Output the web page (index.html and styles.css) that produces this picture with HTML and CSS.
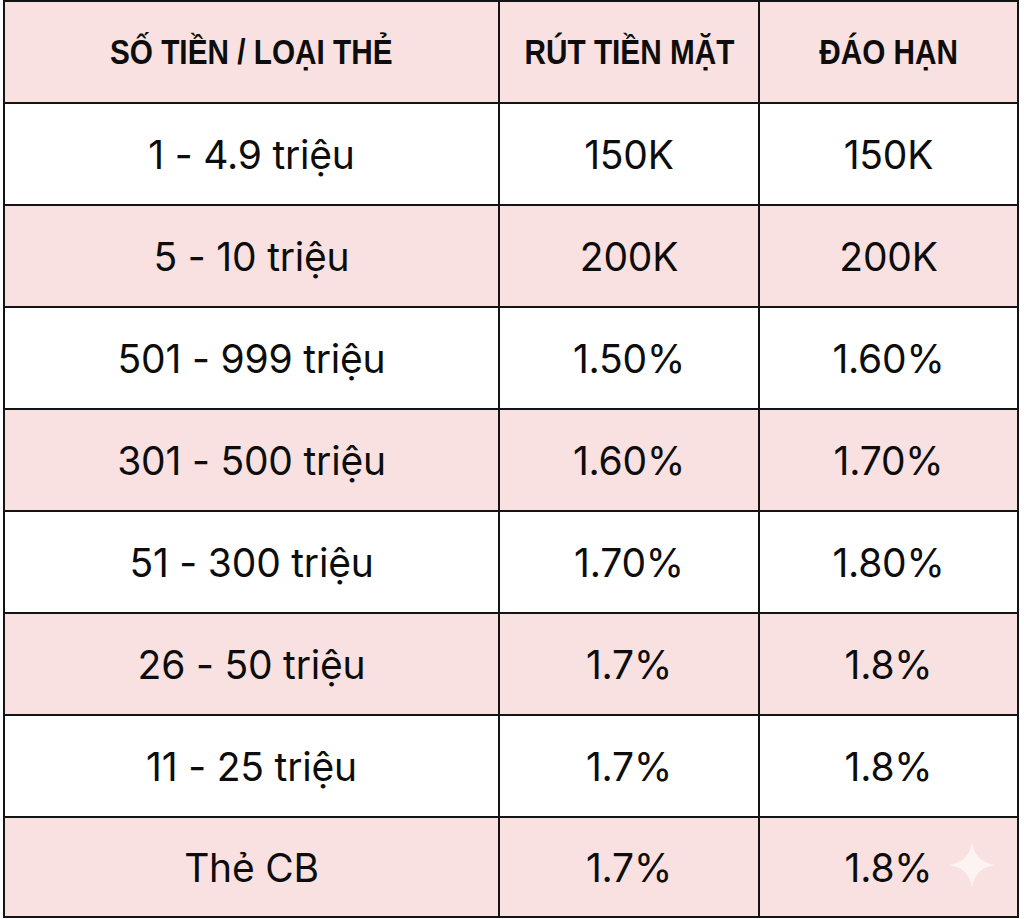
FILE: index.html
```html
<!DOCTYPE html>
<html lang="vi">
<head>
<meta charset="utf-8">
<title>Bảng phí</title>
<link rel="stylesheet" href="styles.css">
</head>
<body>
<div class="table">
  <div class="cell head"><span>SỐ TIỀN / LOẠI THẺ</span></div>
  <div class="cell head"><span>RÚT TIỀN MẶT</span></div>
  <div class="cell head"><span>ĐÁO HẠN</span></div>

  <div class="cell">1 - 4.9 triệu</div>
  <div class="cell">150K</div>
  <div class="cell">150K</div>

  <div class="cell pink">5 - 10 triệu</div>
  <div class="cell pink">200K</div>
  <div class="cell pink">200K</div>

  <div class="cell">501 - 999 triệu</div>
  <div class="cell">1.50%</div>
  <div class="cell">1.60%</div>

  <div class="cell pink">301 - 500 triệu</div>
  <div class="cell pink">1.60%</div>
  <div class="cell pink">1.70%</div>

  <div class="cell">51 - 300 triệu</div>
  <div class="cell">1.70%</div>
  <div class="cell">1.80%</div>

  <div class="cell pink">26 - 50 triệu</div>
  <div class="cell pink">1.7%</div>
  <div class="cell pink">1.8%</div>

  <div class="cell">11 - 25 triệu</div>
  <div class="cell">1.7%</div>
  <div class="cell">1.8%</div>

  <div class="cell pink">Thẻ CB</div>
  <div class="cell pink">1.7%</div>
  <div class="cell pink last">1.8%
    <svg class="sparkle" viewBox="0 0 48 48" aria-hidden="true">
      <path d="M24 0 Q27 21 48 24 Q27 27 24 48 Q21 27 0 24 Q21 21 24 0Z"/>
    </svg>
  </div>
</div>
</body>
</html>
```
FILE: styles.css
```css
html, body {
  margin: 0;
  padding: 0;
  background: #ffffff;
}

body {
  width: 1024px;
  height: 919px;
  overflow: hidden;
}

.table {
  margin-left: 3px;
  width: 1016px;
  box-sizing: border-box;
  display: grid;
  grid-template-columns: 493px 258px 257px;
  grid-template-rows: repeat(8, 100px) 98px;
  gap: 2px;
  padding: 2px;
  background: #141414;
  font-family: Inter, "Noto Sans", sans-serif;
  color: #0d0d0d;
}

.cell {
  background: #ffffff;
  display: flex;
  align-items: center;
  justify-content: center;
  font-size: 39px;
  font-weight: 400;
  letter-spacing: -0.2px;
}

.pink,
.head {
  background: #f8e1e0;
}

.head {
  font-family: "Liberation Sans", Arial, sans-serif;
  font-weight: 700;
  font-size: 35px;
  letter-spacing: 0;
}

.head span {
  display: inline-block;
  white-space: nowrap;
  transform: scaleX(0.85);
}

.last {
  position: relative;
}

.sparkle {
  position: absolute;
  left: 188px;
  top: 24px;
  width: 48px;
  height: 46px;
  fill: #ffffff;
  opacity: 0.6;
}
```
